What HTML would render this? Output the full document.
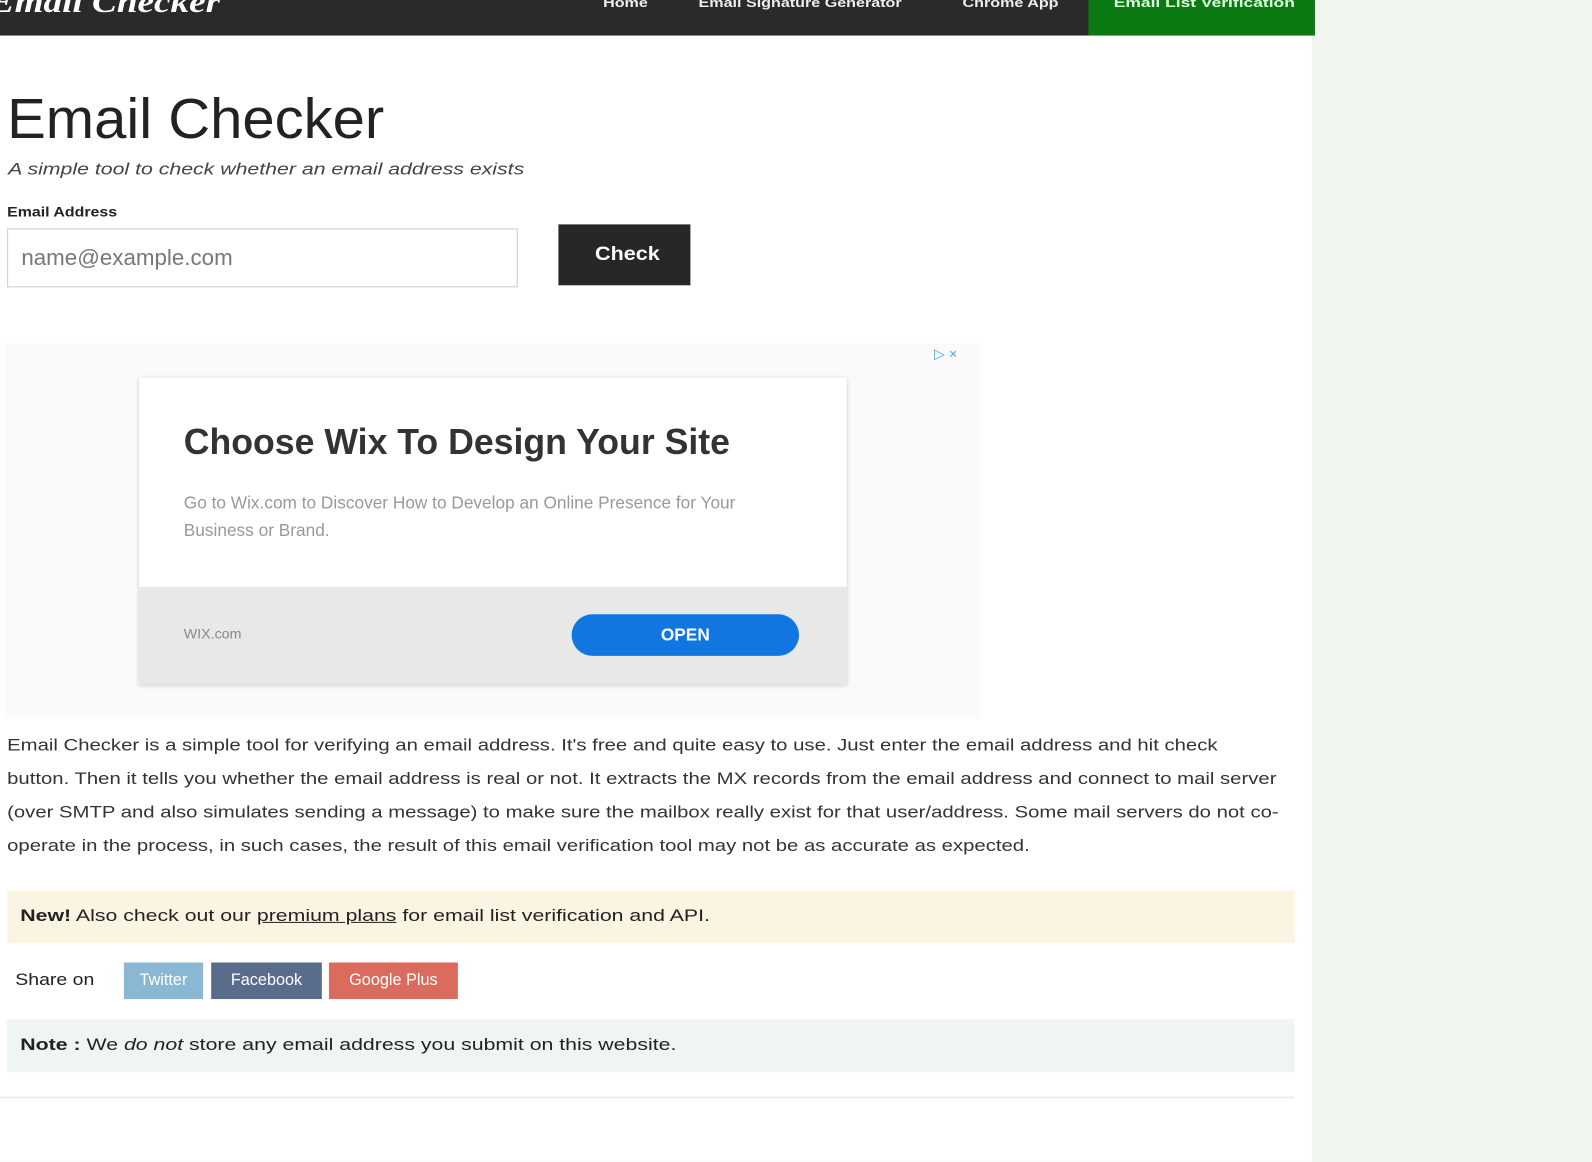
<!DOCTYPE html>
<html><head><style>
body{margin:0;width:1592px;height:1144px;overflow:hidden;background:#f1f6ef;font-family:"Liberation Sans",sans-serif;color:#222}
#w{position:absolute;left:0;top:0;width:1568px;height:1127px;transform:scale(1.0153);transform-origin:0 0}
.main{position:absolute;left:0;top:0;width:1292px;height:1144px;background:#fff}
.nav{position:absolute;left:0;top:0;width:1295px;height:35px;background:#2b2929}
.logo{position:absolute;left:-10px;top:-14px;font:italic bold 30px "Liberation Serif",serif;color:#fff;transform:scaleX(1.22);transform-origin:0 0}
.sx{display:inline-block;transform-origin:0 0;white-space:nowrap}
.nav a,.green a{position:absolute;top:-5px;color:#eee;font-size:13px;font-weight:bold;transform:scaleX(1.22);transform-origin:0 0;white-space:nowrap}
.green{position:absolute;left:1072px;top:0;width:223px;height:35px;background:#0b7a12}
h1{position:absolute;left:7px;top:84px;margin:0;font-weight:normal;font-size:56px;color:#222;transform:scaleX(1.02);transform-origin:0 0}
.sub{position:absolute;left:8px;top:159px;font-style:italic;font-size:16px;color:#444;transform:scaleX(1.31);transform-origin:0 0;white-space:nowrap}
.lbl{position:absolute;left:7px;top:200px;font-size:14px;font-weight:bold;transform:scaleX(1.12);transform-origin:0 0}
.inp{position:absolute;left:7px;top:225px;width:503px;height:58px;border:1px solid #ccc;box-sizing:border-box;font-size:22px;color:#777;padding:15px 13px}
.btn{position:absolute;left:550px;top:221px;width:130px;height:60px;background:#282626;color:#fff;font-weight:bold;font-size:19px;text-align:center;line-height:60px}
.ad{position:absolute;left:5px;top:338px;width:960px;height:370px;background:#fafafa}
.card{position:absolute;left:137px;top:372px;width:697px;height:302px;background:#fff;box-shadow:0 1px 4px #ccc}
.card h2{position:absolute;left:44px;top:42px;margin:0;font-size:36px;font-weight:bold;color:#333;white-space:nowrap;transform:scaleX(0.975);transform-origin:0 0}
.card p{position:absolute;left:44px;top:110px;margin:0;font-size:17px;line-height:27px;color:#999;width:565px}
.foot{position:absolute;left:0;bottom:0;width:697px;height:96px;background:#e8e8e8}
.open{position:absolute;left:426px;top:27px;width:224px;height:41px;border-radius:21px;background:#1176e0;color:#fff;text-align:center;line-height:41px;font-size:17px;font-weight:bold}
.para{position:absolute;left:7px;top:718px;width:1005px;font-size:16px;line-height:33px;color:#333;transform:scaleX(1.25);transform-origin:0 0}
.new{position:absolute;left:7px;top:877px;width:1268px;height:52px;background:#fcf4e3;font-size:16px;line-height:52px;padding-left:13px;box-sizing:border-box}
.new span,.note span{display:inline-block;transform:scaleX(1.31);transform-origin:0 0;white-space:nowrap}
.share{position:absolute;left:15px;top:948px;font-size:16px;line-height:36px;transform:scaleX(1.2);transform-origin:0 0}
.s{position:absolute;top:948px;height:36px;color:#fff;font-size:16px;line-height:36px;text-align:center;overflow:hidden}
.note{position:absolute;left:7px;top:1004px;width:1268px;height:52px;background:#eff5f1;font-size:16px;line-height:52px;padding-left:13px;box-sizing:border-box}
</style></head><body><div id="w">
<div class="main"></div>
<div class="nav"><div class="logo">Email Checker</div>
<a style="left:594px">Home</a><a style="left:688px">Email Signature Generator</a><a style="left:948px">Chrome App</a></div>
<div class="green"><a style="left:25px;color:#dfd;transform:scaleX(1.32)">Email List Verification</a></div>
<h1>Email Checker</h1>
<div class="sub">A simple tool to check whether an email address exists</div>
<div class="lbl">Email Address</div>
<div class="inp">name@example.com</div>
<div class="btn"><span class="sx" style="transform:scaleX(1.12)">Check</span></div>
<div class="ad"><span style="position:absolute;left:915px;top:2px;color:#4aa3df;font-size:14px">▷ ×</span></div>
<div class="card"><h2>Choose Wix To Design Your Site</h2>
<p>Go to Wix.com to Discover How to Develop an Online Presence for Your Business or Brand.</p>
<div class="foot"><span style="position:absolute;left:44px;top:38px;font-size:14px;color:#888">WIX.com</span><div class="open">OPEN</div></div></div>
<div class="para">Email Checker is a simple tool for verifying an email address. It's free and quite easy to use. Just enter the email address and hit check button. Then it tells you whether the email address is real or not. It extracts the MX records from the email address and connect to mail server (over SMTP and also simulates sending a message) to make sure the mailbox really exist for that user/address. Some mail servers do not co-operate in the process, in such cases, the result of this email verification tool may not be as accurate as expected.</div>
<div class="new"><span><b>New!</b> Also check out our <u>premium plans</u> for email list verification and API.</span></div>
<div class="share">Share on</div>
<div class="s" style="left:122px;width:78px;background:#8ab7d3">Twitter</div>
<div class="s" style="left:208px;width:109px;background:#5a6c8c">Facebook</div>
<div class="s" style="left:324px;width:127px;background:#db6b5c">Google Plus</div>
<div class="note"><span><b>Note :</b> We <i>do not</i> store any email address you submit on this website.</span></div>
<div style="position:absolute;left:0;top:1080px;width:1275px;height:2px;background:#eee"></div>
</div></body></html>
